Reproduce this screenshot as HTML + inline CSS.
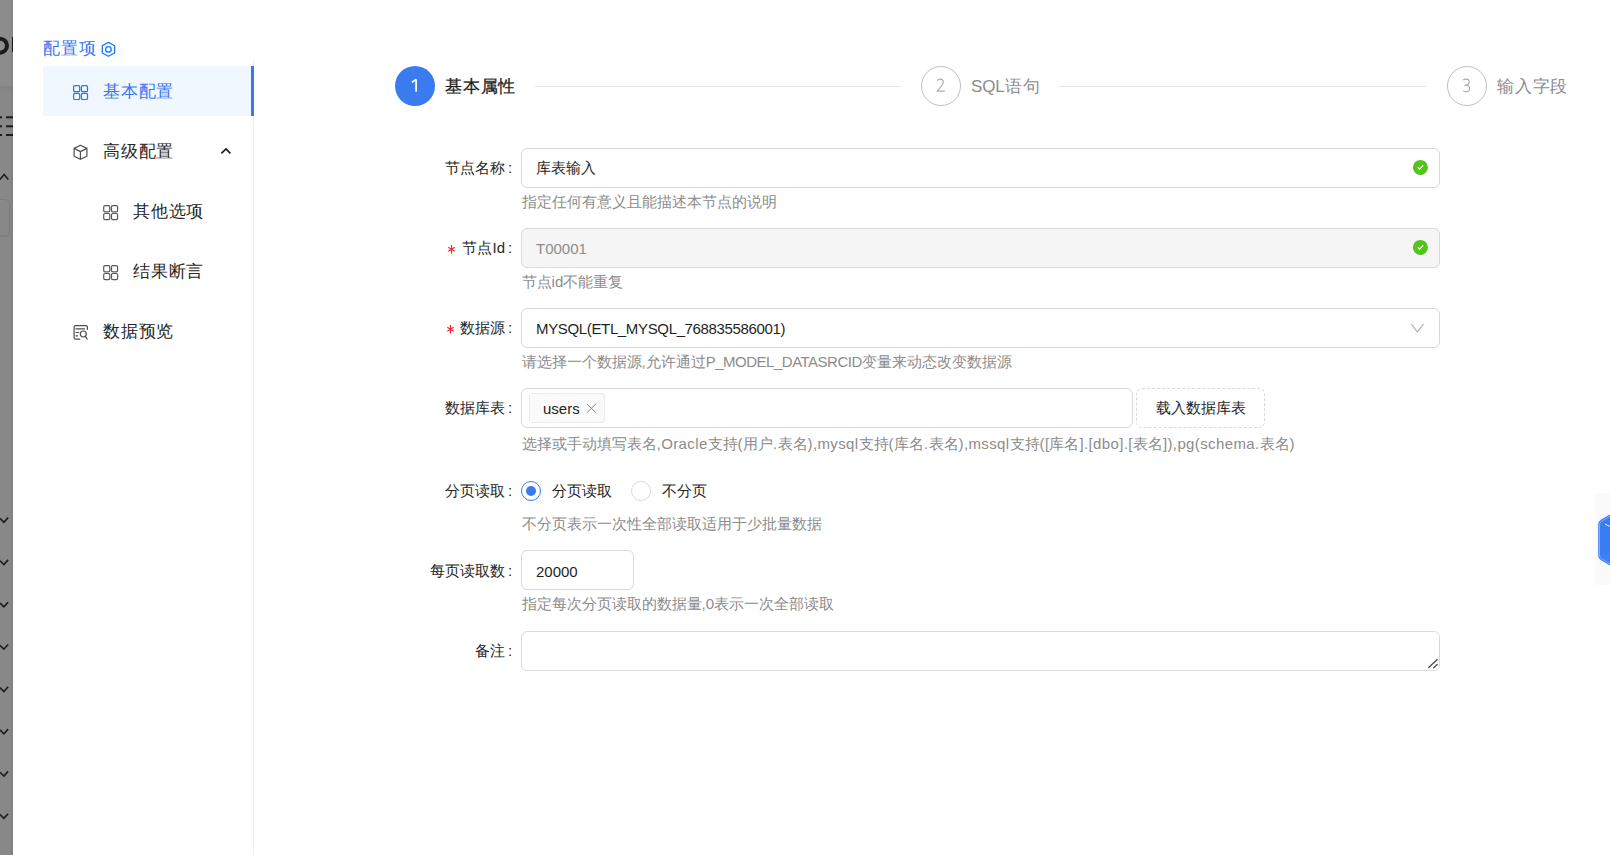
<!DOCTYPE html>
<html><head><meta charset="utf-8">
<style>
*{box-sizing:border-box;margin:0;padding:0}
html,body{width:1610px;height:855px;overflow:hidden;background:#fff;font-family:"Liberation Sans",sans-serif;color:#1f1f1f}
.abs{position:absolute}
svg{position:absolute;overflow:visible}
.ov{position:absolute;left:0;top:0;width:13px;height:855px;background:#888888;overflow:hidden}
.ovtop{position:absolute;left:0;top:0;width:13px;height:86px;background:#8c8c8c}
.sb-title{position:absolute;left:43px;top:37px;font-size:17px;letter-spacing:0.8px;line-height:24px;color:#3575f0;white-space:nowrap}
.sel{position:absolute;left:43px;top:66px;width:211px;height:50px;background:#f0f7ff}
.selbar{position:absolute;left:251px;top:66px;width:3px;height:50px;background:#3b78f0}
.vline{position:absolute;left:253px;top:61px;width:1px;height:794px;background:#ebebeb}
.mi{position:absolute;font-size:17px;letter-spacing:0.8px;line-height:24px;white-space:nowrap;color:#262626}
.step-c{position:absolute;width:40px;height:40px;border-radius:50%;text-align:center;line-height:38px;font-size:17px}
.step-t{position:absolute;font-size:17px;letter-spacing:0.8px;line-height:24px;white-space:nowrap}
.step-l{position:absolute;top:86px;height:1px;background:#e6e6e6}
.lbl{position:absolute;right:1105px;font-size:15px;line-height:22px;white-space:nowrap;color:#262626;text-align:right}
.la{letter-spacing:0.38px}
.lbl i{font-style:normal;position:absolute;left:100%;margin-left:3px}
.req{color:#ff4d4f;font-family:"Liberation Mono",monospace;margin-right:4px;font-size:14px}
.inp{position:absolute;left:521px;height:40px;border:1px solid #d9d9d9;border-radius:6px;background:#fff;font-size:15px;line-height:38px;padding-left:14px;white-space:nowrap;color:#1f1f1f}
.help{position:absolute;left:521.6px;font-size:15px;line-height:22px;color:#8c8c8c;white-space:nowrap}
</style></head><body>

<!-- left overlay strip -->
<div class="ov">
  <div class="ovtop"></div>
  <div class="abs" style="left:0;top:86px;width:13px;height:6px;background:linear-gradient(#838383,#888888)"></div>
  <svg style="left:0;top:0" width="13" height="855" viewBox="0 0 13 855">
    <circle cx="0" cy="45.7" r="7" fill="none" stroke="#1c1c1c" stroke-width="4"/>
    <rect x="12" y="37" width="1.2" height="15" fill="#1c1c1c"/>
    <g fill="#1c1c1c"><rect x="0" y="116.3" width="2" height="2"/><rect x="0" y="125.3" width="2" height="2"/><rect x="0" y="134" width="2" height="2"/>
    <rect x="6" y="116.3" width="7" height="2"/><rect x="6" y="125.3" width="7" height="2"/><rect x="6" y="134" width="7" height="2"/></g>
    <path d="M0 179.5 L4.1 174.5 L8.3 179.5" fill="none" stroke="#1c1c1c" stroke-width="1.5"/>
    <rect x="-6" y="199.5" width="15.5" height="36.5" rx="4" fill="none" stroke="#737b86" stroke-width="1"/>
    <g fill="none" stroke="#1c1c1c" stroke-width="1.6">
      <path d="M0 518.4 L3.9 522.3 L8.1 517.6"/>
      <path d="M0 560.7 L3.9 564.6 L8.1 559.9"/>
      <path d="M0 603 L3.9 606.9 L8.1 602.2"/>
      <path d="M0 645.3 L3.9 649.2 L8.1 644.5"/>
      <path d="M0 687.6 L3.9 691.5 L8.1 686.8"/>
      <path d="M0 729.9 L3.9 733.8 L8.1 729.1"/>
      <path d="M0 772.2 L3.9 776.1 L8.1 771.4"/>
      <path d="M0 814.5 L3.9 818.4 L8.1 813.7"/>
    </g>
  </svg>
  <div class="abs" style="left:10px;top:0;width:3px;height:855px;background:linear-gradient(90deg,rgba(0,0,0,0),rgba(0,0,0,.08))"></div>
</div>

<!-- sidebar -->
<div class="sb-title">配置项</div>
<svg style="left:96px;top:37px" width="25" height="25" viewBox="0 0 25 25"><path d="M12.4 5.4 L18.6 8.7 L18.6 16 L12.4 19.3 L6.3 16 L6.3 8.7 Z" fill="none" stroke="#1677ff" stroke-width="1.3" stroke-linejoin="round"/><circle cx="12.4" cy="12.4" r="2.8" fill="none" stroke="#1677ff" stroke-width="1.3"/></svg>
<div class="vline"></div>
<div class="sel"></div>
<div class="selbar"></div>

<svg style="left:68px;top:80px" width="25" height="25" viewBox="0 0 25 25"><g fill="none" stroke="#1677ff" stroke-width="1.2"><rect x="5.6" y="5.6" width="6.1" height="6.1" rx="1.3"/><rect x="13.4" y="5.6" width="6.1" height="6.1" rx="1.3"/><rect x="5.6" y="13.4" width="6.1" height="6.1" rx="1.3"/><rect x="13.4" y="13.4" width="6.1" height="6.1" rx="1.3"/></g></svg>
<div class="mi" style="left:103px;top:80px;color:#3575f0">基本配置</div>

<svg style="left:68px;top:139px" width="25" height="25" viewBox="0 0 25 25"><g fill="none" stroke="#4d4d4d" stroke-width="1.2" stroke-linejoin="round"><path d="M12.4 6.3 L18.9 9.4 L18.9 17.3 L12.4 20.3 L6.1 17.3 L6.1 9.4 Z"/><path d="M6.1 9.4 L12.4 12.6 L18.9 9.4 M12.4 12.6 L12.4 20.3"/></g></svg>
<div class="mi" style="left:103px;top:140px">高级配置</div>
<svg style="left:214px;top:140px" width="25" height="25" viewBox="0 0 25 25"><path d="M7.4 13.4 L12 8.9 L16.4 13.4" fill="none" stroke="#1a1a1a" stroke-width="1.6"/></svg>

<svg style="left:98px;top:199px" width="25" height="25" viewBox="0 0 25 25"><g fill="none" stroke="#595959" stroke-width="1.2"><rect x="5.7" y="6.7" width="6.1" height="6.1" rx="1.3"/><rect x="13.5" y="6.7" width="6.1" height="6.1" rx="1.3"/><rect x="5.7" y="14.5" width="6.1" height="6.1" rx="1.3"/><rect x="13.5" y="14.5" width="6.1" height="6.1" rx="1.3"/></g></svg>
<div class="mi" style="left:133px;top:200px">其他选项</div>
<svg style="left:98px;top:259px" width="25" height="25" viewBox="0 0 25 25"><g fill="none" stroke="#595959" stroke-width="1.2"><rect x="5.7" y="6.7" width="6.1" height="6.1" rx="1.3"/><rect x="13.5" y="6.7" width="6.1" height="6.1" rx="1.3"/><rect x="5.7" y="14.5" width="6.1" height="6.1" rx="1.3"/><rect x="13.5" y="14.5" width="6.1" height="6.1" rx="1.3"/></g></svg>
<div class="mi" style="left:133px;top:260px">结果断言</div>

<svg style="left:68px;top:320px" width="25" height="25" viewBox="0 0 25 25"><g fill="none" stroke="#4d4d4d" stroke-width="1.2" stroke-linecap="round"><path d="M11.7 19.2 H7.6 Q6.1 19.2 6.1 17.7 V7.1 Q6.1 5.6 7.6 5.6 H17.9 Q19.4 5.6 19.4 7.1 V9.4"/><path d="M8 8.9 H16.5 M8 12.5 H10.5 M8 15.8 H9.6"/><circle cx="15.3" cy="14" r="3"/><path d="M17.4 16.4 L19.2 19.2"/></g></svg>
<div class="mi" style="left:103px;top:320px">数据预览</div>

<!-- steps -->
<div class="step-c" style="left:395px;top:66px;background:#3b7bf0"></div>
<svg style="left:404px;top:74px" width="22" height="24" viewBox="0 0 22 24"><path d="M8 8.3 L12.1 5.4 V17.8" fill="none" stroke="#fff" stroke-width="1.7" stroke-linejoin="bevel"/></svg>
<div class="step-t" style="left:445px;top:75px;color:#1f1f1f;-webkit-text-stroke:0.3px #1f1f1f">基本属性</div>
<div class="step-l" style="left:535px;width:366px"></div>
<div class="step-c" style="left:921px;top:66px;border:1px solid #bfbfbf"></div>
<svg style="left:930px;top:74px" width="22" height="24" viewBox="0 0 22 24"><path d="M7.3 6.6 C7.9 5.6 9 5.1 10.3 5.1 C12.2 5.1 13.4 6.3 13.4 8.1 C13.4 10.3 11.8 11.9 7.3 17.1 H14.8" fill="none" stroke="#ababab" stroke-width="1.1"/></svg>
<div class="step-t" style="left:971px;top:75px;color:#8c8c8c"><span style="letter-spacing:-0.1px">SQL</span>语句</div>
<div class="step-l" style="left:1058px;width:368px"></div>
<div class="step-c" style="left:1447px;top:66px;border:1px solid #bfbfbf"></div>
<svg style="left:1456px;top:74px" width="22" height="24" viewBox="0 0 22 24"><path d="M7.2 6 C7.9 5.4 8.9 5.1 10 5.1 C11.9 5.1 13.2 6.2 13.2 7.9 C13.2 9.9 11.7 11.2 8.3 11.2 C12 11.2 13.7 12.6 13.7 14.5 C13.7 16.5 12.1 17.6 10 17.6 C8.8 17.6 7.8 17.3 7 16.6" fill="none" stroke="#ababab" stroke-width="1.1"/></svg>
<div class="step-t" style="left:1497px;top:75px;color:#8c8c8c">输入字段</div>

<!-- form -->
<div class="lbl" style="top:157px">节点名称<i>:</i></div>
<div class="inp" style="top:148px;width:919px">库表输入</div>
<svg style="left:1405px;top:155px" width="30" height="25" viewBox="0 0 30 25"><circle cx="15.4" cy="12.4" r="7.5" fill="#52c41a"/><path d="M12.9 12.4 L14.5 14.4 L18.2 10.2" fill="none" stroke="#fff" stroke-width="1.05"/></svg>
<div class="help" style="top:191px">指定任何有意义且能描述本节点的说明</div>

<svg style="left:448px;top:244.5px" width="8" height="9" viewBox="0 0 8 9"><path d="M3.5 0 V8.5 M0.3 2.2 L6.7 6.3 M0.3 6.3 L6.7 2.2" stroke="#f5222d" stroke-width="1.1" fill="none"/></svg>
<div class="lbl" style="top:237px">节点Id<i>:</i></div>
<div class="inp" style="top:228px;width:919px;background:#f5f5f5;color:#8c8c8c"><span style="position:relative;top:1px">T00001</span></div>
<svg style="left:1405px;top:235px" width="30" height="25" viewBox="0 0 30 25"><circle cx="15.4" cy="12.4" r="7.5" fill="#52c41a"/><path d="M12.9 12.4 L14.5 14.4 L18.2 10.2" fill="none" stroke="#fff" stroke-width="1.05"/></svg>
<div class="help" style="top:271px">节点id不能重复</div>

<svg style="left:447px;top:324.5px" width="8" height="9" viewBox="0 0 8 9"><path d="M3.5 0 V8.5 M0.3 2.2 L6.7 6.3 M0.3 6.3 L6.7 2.2" stroke="#f5222d" stroke-width="1.1" fill="none"/></svg>
<div class="lbl" style="top:317px">数据源<i>:</i></div>
<div class="inp" style="top:308px;width:919px"><span style="letter-spacing:-0.35px;position:relative;top:1px">MYSQL(ETL_MYSQL_768835586001)</span></div>
<svg style="left:1405px;top:315px" width="25" height="25" viewBox="0 0 25 25"><path d="M6.4 9.1 L12.4 17 L18.6 9.1" fill="none" stroke="#b3b3b3" stroke-width="1.2"/></svg>
<div class="help" style="top:351px">请选择一个数据源,允许通过<span style="letter-spacing:-0.5px">P_MODEL_DATASRCID</span>变量来动态改变数据源</div>

<div class="lbl" style="top:397px">数据库表<i>:</i></div>
<div class="inp" style="top:388px;width:612px"></div>
<div class="abs" style="left:529px;top:393px;width:76px;height:30px;background:#fafafa;border:1px solid #ebebeb;border-radius:3px;font-size:15px;line-height:28px;padding-left:13px"><span style="position:relative;top:1px">users</span></div>
<svg style="left:575px;top:393px" width="35" height="30" viewBox="0 0 35 30"><path d="M12 11 L20.8 19.6 M20.8 11 L12 19.6" fill="none" stroke="#8c8c8c" stroke-width="1"/></svg>
<div class="abs" style="left:1136px;top:388px;width:129px;height:40px;border:1px dashed #d9d9d9;border-radius:6px;font-size:15px;line-height:38px;text-align:center">载入数据库表</div>
<div class="help" style="top:433px">选择或手动填写表名<span class="la">,Oracle</span>支持<span class="la">(</span>用户<span class="la">.</span>表名<span class="la">),mysql</span>支持<span class="la">(</span>库名<span class="la">.</span>表名<span class="la">),mssql</span>支持<span class="la">([</span>库名<span class="la">].[dbo].[</span>表名<span class="la">]),pg(schema.</span>表名<span class="la">)</span></div>

<div class="lbl" style="top:480px">分页读取<i>:</i></div>
<div class="abs" style="left:521px;top:481px;width:20px;height:20px;border:1px solid #3b7bf0;border-radius:50%"></div>
<div class="abs" style="left:526px;top:486px;width:10px;height:10px;background:#3b7bf0;border-radius:50%"></div>
<div class="abs" style="left:552px;top:480px;font-size:15px;line-height:22px">分页读取</div>
<div class="abs" style="left:631px;top:481px;width:20px;height:20px;border:1px solid #d9d9d9;border-radius:50%"></div>
<div class="abs" style="left:662px;top:480px;font-size:15px;line-height:22px">不分页</div>
<div class="help" style="top:513px">不分页表示一次性全部读取适用于少批量数据</div>

<div class="lbl" style="top:560px">每页读取数<i>:</i></div>
<div class="inp" style="top:550px;width:113px"><span style="position:relative;top:1.5px">20000</span></div>
<div class="help" style="top:593px">指定每次分页读取的数据量,0表示一次全部读取</div>

<div class="lbl" style="top:640px">备注<i>:</i></div>
<div class="inp" style="top:631px;width:919px"></div>
<svg style="left:1420px;top:650px" width="25" height="25" viewBox="0 0 25 25"><g stroke="#4a4a4a" stroke-width="1.3" stroke-linecap="round"><path d="M8.7 17.5 L17.2 9.6"/><path d="M13.6 17.8 L17.2 14.5"/></g></svg>

<!-- floating button -->
<div class="abs" style="left:1595px;top:493px;width:15px;height:92px;background:#fafafa"></div>
<svg style="left:1590px;top:505px" width="20" height="70" viewBox="0 0 20 70">
  <path d="M20 9.5 L10.8 14.8 Q8.2 16.3 8.2 19.3 V50.5 Q8.2 53.5 10.8 55 L20 60.5 Z" fill="#3a7cf4"/>
  <path d="M20 11.3 L11.6 16.1 Q9.5 17.3 9.5 19.8 V50 Q9.5 52.5 11.6 53.7 L20 58.7" fill="none" stroke="#8db6ff" stroke-width="0.9"/>
  <path d="M20 47 L10 52.5 L20 58" fill="#3f86ff" opacity="0.6"/>
  <path d="M15 19 L20 21.5" stroke="#fff" stroke-width="0.9"/>
</svg>
</body></html>
